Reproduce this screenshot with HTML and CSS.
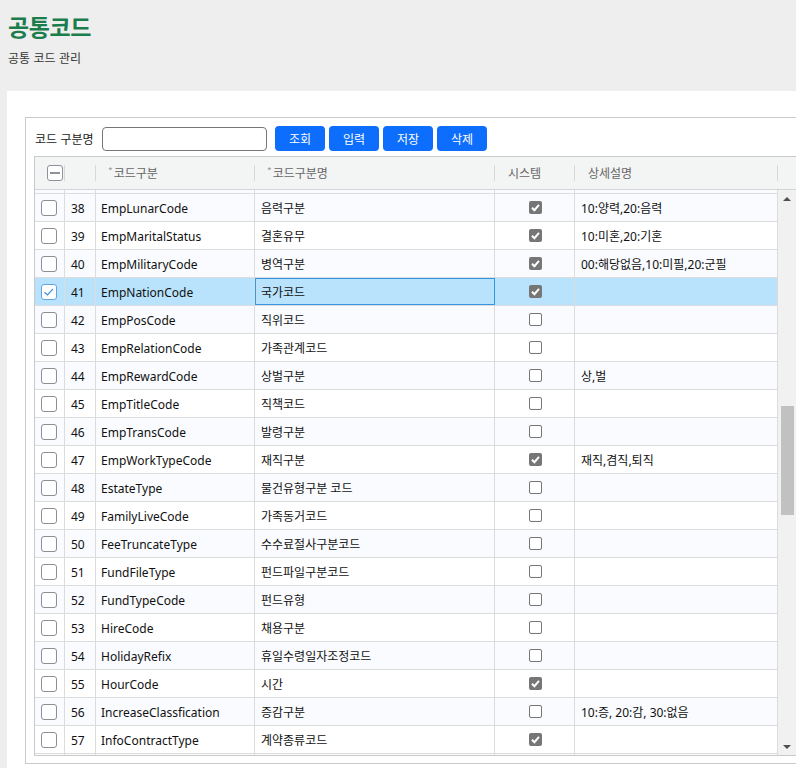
FILE: index.html
```html
<!DOCTYPE html>
<html lang="ko">
<head>
<meta charset="utf-8">
<title>공통코드</title>
<link rel="stylesheet" href="styles.css">
</head>
<body>
<header class="page-head">
  <h1 class="title">공통코드</h1>
  <p class="subtitle">공통 코드 관리</p>
</header>
<main class="panel">
  <section class="box">
    <div class="toolbar">
      <label class="search-label" for="q">코드 구분명</label>
      <input id="q" class="search-input" type="text">
      <div class="btns">
        <button class="btn">조회</button>
        <button class="btn">입력</button>
        <button class="btn">저장</button>
        <button class="btn">삭제</button>
      </div>
    </div>
    <div class="grid">
      <div class="grid-head">
        <div class="hcell hc-check"><span class="hbox"><span class="dash"></span></span></div>
        <div class="hcell hc-no"></div>
        <div class="hcell hc-code"><span class="req">*</span>코드구분</div>
        <div class="hcell hc-name"><span class="req">*</span>코드구분명</div>
        <div class="hcell hc-sys">시스템</div>
        <div class="hcell hc-desc">상세설명</div>
        <div class="hcell hc-fill"></div>
      </div>
      <div class="grid-body">
        <div class="rows">
          <div class="row first even"><div class="cell c-check"></div><div class="cell c-no"></div><div class="cell c-code"></div><div class="cell c-name"></div><div class="cell c-sys"></div><div class="cell c-desc"></div></div>
          <div class="row even"><div class="cell c-check"><span class="rbox"></span></div><div class="cell c-no">38</div><div class="cell c-code">EmpLunarCode</div><div class="cell c-name">음력구분</div><div class="cell c-sys"><span class="sbox on"><svg width="13" height="13" viewBox="0 0 13 13"><polyline points="3,6.8 5.4,9.2 10,3.8" fill="none" stroke="#fff" stroke-width="2"/></svg></span></div><div class="cell c-desc">10:양력,20:음력</div></div>
          <div class="row"><div class="cell c-check"><span class="rbox"></span></div><div class="cell c-no">39</div><div class="cell c-code">EmpMaritalStatus</div><div class="cell c-name">결혼유무</div><div class="cell c-sys"><span class="sbox on"><svg width="13" height="13" viewBox="0 0 13 13"><polyline points="3,6.8 5.4,9.2 10,3.8" fill="none" stroke="#fff" stroke-width="2"/></svg></span></div><div class="cell c-desc">10:미혼,20:기혼</div></div>
          <div class="row even"><div class="cell c-check"><span class="rbox"></span></div><div class="cell c-no">40</div><div class="cell c-code">EmpMilitaryCode</div><div class="cell c-name">병역구분</div><div class="cell c-sys"><span class="sbox on"><svg width="13" height="13" viewBox="0 0 13 13"><polyline points="3,6.8 5.4,9.2 10,3.8" fill="none" stroke="#fff" stroke-width="2"/></svg></span></div><div class="cell c-desc">00:해당없음,10:미필,20:군필</div></div>
          <div class="row selected"><div class="cell c-check"><span class="rbox checked"><svg width="16" height="16" viewBox="0 0 16 16"><polyline points="3.5,8.2 6.5,11 12,4.8" fill="none" stroke="#3b8fe0" stroke-width="1.2"/></svg></span></div><div class="cell c-no">41</div><div class="cell c-code">EmpNationCode</div><div class="cell c-name focus">국가코드</div><div class="cell c-sys"><span class="sbox on"><svg width="13" height="13" viewBox="0 0 13 13"><polyline points="3,6.8 5.4,9.2 10,3.8" fill="none" stroke="#fff" stroke-width="2"/></svg></span></div><div class="cell c-desc"></div></div>
          <div class="row even"><div class="cell c-check"><span class="rbox"></span></div><div class="cell c-no">42</div><div class="cell c-code">EmpPosCode</div><div class="cell c-name">직위코드</div><div class="cell c-sys"><span class="sbox"></span></div><div class="cell c-desc"></div></div>
          <div class="row"><div class="cell c-check"><span class="rbox"></span></div><div class="cell c-no">43</div><div class="cell c-code">EmpRelationCode</div><div class="cell c-name">가족관계코드</div><div class="cell c-sys"><span class="sbox"></span></div><div class="cell c-desc"></div></div>
          <div class="row even"><div class="cell c-check"><span class="rbox"></span></div><div class="cell c-no">44</div><div class="cell c-code">EmpRewardCode</div><div class="cell c-name">상벌구분</div><div class="cell c-sys"><span class="sbox"></span></div><div class="cell c-desc">상,벌</div></div>
          <div class="row"><div class="cell c-check"><span class="rbox"></span></div><div class="cell c-no">45</div><div class="cell c-code">EmpTitleCode</div><div class="cell c-name">직책코드</div><div class="cell c-sys"><span class="sbox"></span></div><div class="cell c-desc"></div></div>
          <div class="row even"><div class="cell c-check"><span class="rbox"></span></div><div class="cell c-no">46</div><div class="cell c-code">EmpTransCode</div><div class="cell c-name">발령구분</div><div class="cell c-sys"><span class="sbox"></span></div><div class="cell c-desc"></div></div>
          <div class="row"><div class="cell c-check"><span class="rbox"></span></div><div class="cell c-no">47</div><div class="cell c-code">EmpWorkTypeCode</div><div class="cell c-name">재직구분</div><div class="cell c-sys"><span class="sbox on"><svg width="13" height="13" viewBox="0 0 13 13"><polyline points="3,6.8 5.4,9.2 10,3.8" fill="none" stroke="#fff" stroke-width="2"/></svg></span></div><div class="cell c-desc">재직,겸직,퇴직</div></div>
          <div class="row even"><div class="cell c-check"><span class="rbox"></span></div><div class="cell c-no">48</div><div class="cell c-code">EstateType</div><div class="cell c-name">물건유형구분 코드</div><div class="cell c-sys"><span class="sbox"></span></div><div class="cell c-desc"></div></div>
          <div class="row"><div class="cell c-check"><span class="rbox"></span></div><div class="cell c-no">49</div><div class="cell c-code">FamilyLiveCode</div><div class="cell c-name">가족동거코드</div><div class="cell c-sys"><span class="sbox"></span></div><div class="cell c-desc"></div></div>
          <div class="row even"><div class="cell c-check"><span class="rbox"></span></div><div class="cell c-no">50</div><div class="cell c-code">FeeTruncateType</div><div class="cell c-name">수수료절사구분코드</div><div class="cell c-sys"><span class="sbox"></span></div><div class="cell c-desc"></div></div>
          <div class="row"><div class="cell c-check"><span class="rbox"></span></div><div class="cell c-no">51</div><div class="cell c-code">FundFileType</div><div class="cell c-name">펀드파일구분코드</div><div class="cell c-sys"><span class="sbox"></span></div><div class="cell c-desc"></div></div>
          <div class="row even"><div class="cell c-check"><span class="rbox"></span></div><div class="cell c-no">52</div><div class="cell c-code">FundTypeCode</div><div class="cell c-name">펀드유형</div><div class="cell c-sys"><span class="sbox"></span></div><div class="cell c-desc"></div></div>
          <div class="row"><div class="cell c-check"><span class="rbox"></span></div><div class="cell c-no">53</div><div class="cell c-code">HireCode</div><div class="cell c-name">채용구분</div><div class="cell c-sys"><span class="sbox"></span></div><div class="cell c-desc"></div></div>
          <div class="row even"><div class="cell c-check"><span class="rbox"></span></div><div class="cell c-no">54</div><div class="cell c-code">HolidayRefix</div><div class="cell c-name">휴일수령일자조정코드</div><div class="cell c-sys"><span class="sbox"></span></div><div class="cell c-desc"></div></div>
          <div class="row"><div class="cell c-check"><span class="rbox"></span></div><div class="cell c-no">55</div><div class="cell c-code">HourCode</div><div class="cell c-name">시간</div><div class="cell c-sys"><span class="sbox on"><svg width="13" height="13" viewBox="0 0 13 13"><polyline points="3,6.8 5.4,9.2 10,3.8" fill="none" stroke="#fff" stroke-width="2"/></svg></span></div><div class="cell c-desc"></div></div>
          <div class="row even"><div class="cell c-check"><span class="rbox"></span></div><div class="cell c-no">56</div><div class="cell c-code">IncreaseClassfication</div><div class="cell c-name">증감구분</div><div class="cell c-sys"><span class="sbox"></span></div><div class="cell c-desc">10:증, 20:감, 30:없음</div></div>
          <div class="row"><div class="cell c-check"><span class="rbox"></span></div><div class="cell c-no">57</div><div class="cell c-code">InfoContractType</div><div class="cell c-name">계약종류코드</div><div class="cell c-sys"><span class="sbox on"><svg width="13" height="13" viewBox="0 0 13 13"><polyline points="3,6.8 5.4,9.2 10,3.8" fill="none" stroke="#fff" stroke-width="2"/></svg></span></div><div class="cell c-desc"></div></div>
          <div class="row even"><div class="cell c-check"></div><div class="cell c-no"></div><div class="cell c-code"></div><div class="cell c-name"></div><div class="cell c-sys"></div><div class="cell c-desc"></div></div>
        </div>
        <div class="vscroll">
          <div class="arrow"><span class="tri-up"></span></div>
          <div class="thumb"></div>
          <div class="arrow bottom"><span class="tri-down"></span></div>
        </div>
      </div>
    </div>
  </section>
</main>
</body>
</html>
```

FILE: styles.css
```css
html, body {
  margin: 0;
  padding: 0;
  overflow: hidden;
  background: #eeeeee;
}
body {
  font-family: "Noto Sans", "Noto Sans CJK KR", sans-serif;
  font-size: 12px;
  color: #222;
  width: 796px;
  height: 768px;
}
.page-head {
  padding: 11px 8px 0 8px;
}
.title {
  margin: 0;
  font-family: "Noto Sans CJK KR", sans-serif;
  font-size: 23px;
  font-weight: 700;
  line-height: 30px;
  color: #1b7d4c;
  letter-spacing: -0.4px;
}
.subtitle {
  margin: 9px 0 0 0;
  font-family: "Noto Sans CJK KR", sans-serif;
  font-size: 12px;
  line-height: 16px;
  color: #333;
}
.panel {
  margin: 25px 0 0 7px;
  width: 900px;
  background: #fff;
  padding: 26px 0 20px 18px;
}
.box {
  border: 1px solid #c8cacc;
  padding: 8px 0 7px 8px;
}
.toolbar {
  display: flex;
  align-items: center;
  height: 25px;
}
.search-label {
  width: 62px;
  padding-left: 1px;
  font-family: "Noto Sans CJK KR", sans-serif;
  font-size: 12px;
  color: #222;
  margin-right: 5px;
  line-height: 16px;
}
.search-input {
  box-sizing: border-box;
  width: 165px;
  height: 24px;
  border: 1px solid #767676;
  border-radius: 4px;
  padding: 0 4px;
  margin: 1px 8px 0 0;
  outline: none;
}
.btns {
  display: flex;
  gap: 4px;
}
.btn {
  width: 50px;
  height: 25px;
  border: none;
  border-radius: 4px;
  background: #0d6efd;
  color: #fff;
  font-family: "Noto Sans CJK KR", sans-serif;
  font-size: 12px;
  padding: 0;
  line-height: 25px;
}
.grid {
  margin-top: 5px;
  width: 763px;
  border: 1px solid #c8cacc;
}
.grid-head {
  display: flex;
  align-items: center;
  height: 32px;
  background: #f3f4f4;
  border-bottom: 1px solid #d2d4d6;
}
.hcell {
  box-sizing: border-box;
  height: 16px;
  border-right: 1px solid #d8d8d8;
  color: #666;
  font-family: "Noto Sans CJK KR", sans-serif;
  font-size: 12px;
  line-height: 16px;
  padding-left: 12px;
  display: flex;
  align-items: center;
}
.hc-check { width: 30px; padding-left: 12px; }
.hc-no { width: 31px; }
.hc-code { width: 159px; }
.hc-name { width: 240px; }
.hc-sys { width: 80px; padding-left: 13px; }
.hc-desc { width: 203px; padding-left: 13px; }
.hc-fill { flex: 1; border-right: none; }
.req {
  color: #999;
  font-size: 10px;
  margin-right: 1px;
  position: relative;
  top: -2px;
}
.hbox {
  box-sizing: border-box;
  width: 16px;
  height: 16px;
  border: 1px solid #8b9299;
  border-radius: 3px;
  background: #fff;
  display: flex;
  align-items: center;
  justify-content: center;
  flex-shrink: 0;
}
.dash {
  width: 10px;
  height: 2px;
  background: #8b9299;
}
.grid-body {
  display: flex;
  height: 565px;
  overflow: hidden;
}
.rows {
  width: 743px;
  flex-shrink: 0;
}
.row {
  box-sizing: border-box;
  display: grid;
  grid-template-columns: 30px 31px 159px 240px 80px 203px;
  height: 28px;
  border-bottom: 1px solid #dcdcdc;
  background: #fff;
}
.row.first { margin-top: -24px; }
.row.even { background: #f9fbfe; }
.row.selected { background: #b9e3fc; }
.cell {
  box-sizing: border-box;
  border-right: 1px solid #dcdcdc;
  display: flex;
  align-items: center;
  padding-left: 6px;
  padding-top: 2px;
  white-space: nowrap;
  overflow: hidden;
  font-size: 12px;
  color: #111;
  line-height: 25px;
}
.c-check { padding-left: 6px; padding-top: 0; }
.c-code { padding-left: 5px; }
.c-sys { justify-content: center; padding-left: 1px; padding-top: 0; }
.focus {
  outline: 1px solid #3397e6;
  outline-offset: -1px;
}
.rbox {
  box-sizing: border-box;
  width: 16px;
  height: 16px;
  border: 1px solid #8a9097;
  border-radius: 3px;
  background: #fff;
  display: block;
}
.rbox svg { display: block; margin: -1px; }
.rbox.checked { border-color: #5fa5e6; }
.sbox {
  box-sizing: border-box;
  width: 13px;
  height: 13px;
  border: 1px solid #767676;
  border-radius: 2px;
  background: #fff;
  display: block;
}
.sbox.on {
  background: #767676;
  border: none;
}
.sbox svg { display: block; }
.vscroll {
  width: 18px;
  flex-shrink: 0;
  background: #f1f1f1;
  display: flex;
  flex-direction: column;
  align-items: center;
}
.arrow {
  height: 17px;
  width: 18px;
  display: flex;
  align-items: center;
  justify-content: center;
}
.arrow.bottom { margin-top: auto; }
.tri-up {
  width: 0;
  height: 0;
  border-left: 4px solid transparent;
  border-right: 4px solid transparent;
  border-bottom: 4px solid #505050;
  margin-top: 1px;
}
.tri-down {
  width: 0;
  height: 0;
  border-left: 4px solid transparent;
  border-right: 4px solid transparent;
  border-top: 4px solid #505050;
  margin-top: 1px;
}
.thumb {
  width: 13px;
  height: 109px;
  margin-top: 199px;
  background: #c1c1c1;
}
```
